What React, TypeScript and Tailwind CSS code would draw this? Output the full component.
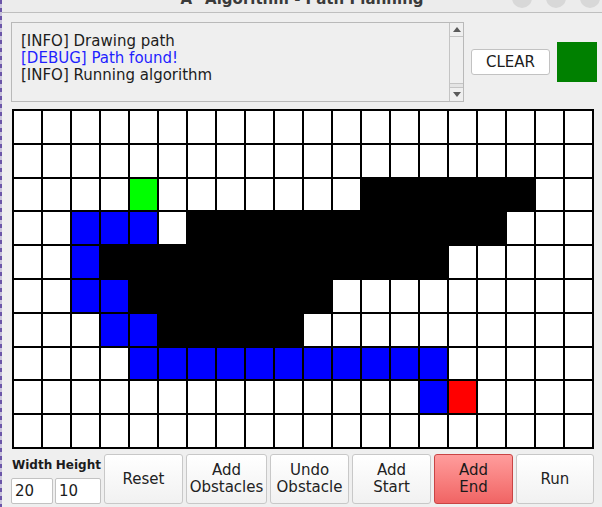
import React from 'react';

const ROWS = [
  'WWWWWWWWWWWWWWWWWWWW',
  'WWWWWWWWWWWWWWWWWWWW',
  'WWWWGWWWWWWWKKKKKKWW',
  'WWPPPWKKKKKKKKKKKWWW',
  'WWPKKKKKKKKKKKKWWWWW',
  'WWPPKKKKKKKWWWWWWWWW',
  'WWWPPKKKKKWWWWWWWWWW',
  'WWWWPPPPPPPPPPPWWWWW',
  'WWWWWWWWWWWWWWPRWWWW',
  'WWWWWWWWWWWWWWWWWWWW',
];

const cellColor: Record<string, string> = {
  W: 'bg-white',
  K: 'bg-black',
  P: 'bg-[#0000ff]',
  G: 'bg-[#00ff00]',
  R: 'bg-[#ff0000]',
};

const font = { fontFamily: '"DejaVu Sans", sans-serif' };

function ToolButton({ label, red = false, w = 'w-[79px]' }: { label: string[]; red?: boolean; w?: string }) {
  return (
    <div
      className={
        'flex h-[50px] flex-col items-center justify-center rounded-[3px] border text-[15px] leading-[17px] ' +
        w +
        ' ' +
        (red
          ? 'border-[#c94444] bg-gradient-to-b from-[#ff9c9c] to-[#f06464] text-[#1a1a1a]'
          : 'border-[#c8c8c8] bg-gradient-to-b from-white to-[#f1f1f1] text-[#222]')
      }
    >
      {label.map((l) => (
        <span key={l}>{l}</span>
      ))}
    </div>
  );
}

export default function App() {
  return (
    <div className="flex h-[507px] w-[602px] bg-[#efefef] text-[#1c1c1c]" style={font}>
      {/* desktop edge */}
      <div className="w-[2px] bg-[repeating-linear-gradient(to_bottom,#6b55a8_0px,#6b55a8_4px,#c9c3dc_4px,#c9c3dc_8px)]" />
      <div className="flex flex-1 flex-col">
        {/* Title bar, cut off by the screenshot */}
        <div className="relative h-[13px] overflow-hidden border-b border-[#bfbfbf] bg-[#ececec]">
          <div className="-mt-[9px] text-center text-[15px] font-bold leading-[17px] text-[#3a3a3a]">
            A* Algorithm - Path Planning
          </div>
          <div className="absolute right-[2px] top-[-12px] flex gap-[14px]">
            <div className="h-[20px] w-[20px] rounded-full bg-[#d8d8d8]" />
            <div className="h-[20px] w-[20px] rounded-full bg-[#d8d8d8]" />
            <div className="h-[20px] w-[20px] rounded-full bg-[#d8d8d8]" />
          </div>
        </div>

        {/* Log + clear + status */}
        <div className="flex items-center gap-[7px] pl-[9px] pt-[9px]">
          <div className="flex h-[80px] w-[453px] border border-[#b9b9b9]">
            <div className="flex-1 pl-[9px] pt-[10px] text-[15px] leading-[17px]">
              <div>[INFO] Drawing path</div>
              <div className="text-[#1f1fff]">[DEBUG] Path found!</div>
              <div>[INFO] Running algorithm</div>
            </div>
            <div className="flex w-[14px] flex-col border-l border-[#c4c4c4]">
              <div className="flex h-[14px] items-center justify-center border-b border-[#c4c4c4]">
                <svg width="8" height="5" viewBox="0 0 8 5">
                  <path d="M0 5 L4 0 L8 5 Z" fill="#5a5a5a" />
                </svg>
              </div>
              <div className="flex-1" />
              <div className="h-[5px] border-y border-[#c4c4c4] bg-[#e4e4e4]" />
              <div className="flex h-[13px] items-center justify-center">
                <svg width="8" height="5" viewBox="0 0 8 5">
                  <path d="M0 0 L4 5 L8 0 Z" fill="#5a5a5a" />
                </svg>
              </div>
            </div>
          </div>
          <div className="flex h-[26px] w-[79px] items-center justify-center rounded-[3px] border border-[#c2c2c2] bg-white text-[15px]">
            CLEAR
          </div>
          <div className="h-[40px] w-[40px] bg-[#008000]" />
        </div>

        {/* Grid */}
        <div className="ml-[10px] mt-[7px] grid h-[340px] w-[582px] grid-cols-[repeat(20,1fr)] grid-rows-[repeat(10,1fr)] gap-[2px] bg-black p-[2px]">
          {ROWS.flatMap((row, r) =>
            row.split('').map((c, i) => <div key={r + '-' + i} className={cellColor[c]} />)
          )}
        </div>

        {/* Controls */}
        <div className="mt-[5px] flex gap-[3px] pl-[9px]">
          <div className="flex w-[90px] flex-col">
            <div className="flex h-[22px] items-center pl-[1px] text-[12px] font-bold">
              <span className="w-[44px]">Width</span>
              <span>Height</span>
            </div>
            <div className="mt-[2px] flex gap-[2px]">
              <div className="flex h-[26px] w-[42px] items-center rounded-[2px] border border-[#c2c2c2] bg-white pl-[3px] text-[15px]">
                20
              </div>
              <div className="flex h-[26px] w-[46px] items-center rounded-[2px] border border-[#c2c2c2] bg-white pl-[3px] text-[15px]">
                10
              </div>
            </div>
          </div>
          <ToolButton label={['Reset']} />
          <ToolButton label={['Add', 'Obstacles']} w="w-[81px]" />
          <ToolButton label={['Undo', 'Obstacle']} />
          <ToolButton label={['Add', 'Start']} />
          <ToolButton label={['Add', 'End']} red />
          <ToolButton label={['Run']} w="w-[78px]" />
        </div>
      </div>
    </div>
  );
}
